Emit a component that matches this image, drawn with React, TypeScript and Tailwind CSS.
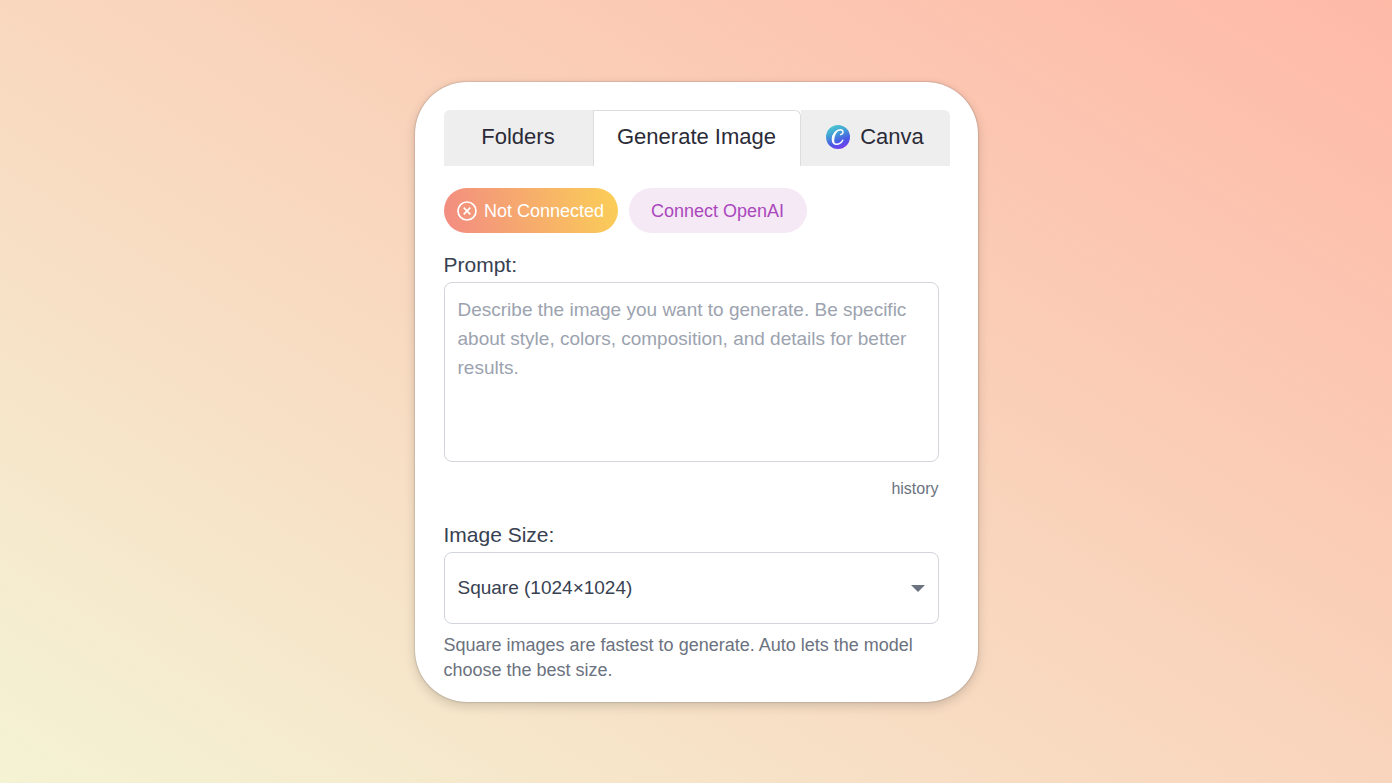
import React, { useState } from 'react';

const tabBase = 'flex h-14 items-center justify-center text-[22px] leading-7 text-[#2b2b38]';

const CanvaLogo: React.FC = () => (
  <svg viewBox="0 0 24 24" className="h-6 w-6 shrink-0" aria-hidden="true">
    <defs>
      <linearGradient id="canva-fill" x1="0.3" y1="0" x2="0.7" y2="1">
        <stop offset="0" stopColor="#4cc8d0" />
        <stop offset="0.3" stopColor="#43a5d3" />
        <stop offset="0.7" stopColor="#4a57e6" />
        <stop offset="1" stopColor="#7b3bee" />
      </linearGradient>
    </defs>
    <circle cx="12" cy="12" r="12" fill="url(#canva-fill)" />
    <path
      d="M14.6 9.6c1.5-.2 2.4-1.3 2.400-2.500 0-1.500-1.100-2.300-2.600-2.300-4.200 0-8 4.800-8 9.400 0 3.200 1.600 5.100 4.300 5.100 2.500 0 4.700-1.500 6.100-4.100"
      fill="none"
      stroke="#fff"
      strokeWidth="1.4"
      strokeLinecap="round"
    />
    <path d="M13 5C9.200 6.400 6.200 10.800 6.400 14.600c.1 2.400 1.300 4.100 3.100 4.600-1.200-1.200-1.500-2.900-1.200-5.100.4-3.400 2-7 4.700-9.100z" fill="#fff" />
  </svg>
);

const ErrorIcon: React.FC = () => (
  <svg viewBox="0 0 20 20" className="h-5 w-5 shrink-0" fill="none" stroke="currentColor" aria-hidden="true">
    <circle cx="10" cy="10" r="9" strokeWidth="1.7" />
    <path d="M6.700 6.700l6.600 6.600M13.300 6.700l-6.600 6.600" strokeWidth="1.700" />
  </svg>
);

export default function App() {
  const [prompt, setPrompt] = useState('');
  const [size, setSize] = useState('square');

  return (
    <div className="flex min-h-screen items-center justify-center bg-[linear-gradient(32deg,#f4f3d4,#feb9a7)] font-['Liberation_Sans',Arial,sans-serif]">
      <main className="w-full max-w-[563px] rounded-[52px] bg-white pt-7 pr-7 pb-[19px] pl-[29px] shadow-[0_0_2px_rgba(0,0,0,0.35),0_4px_12px_rgba(0,0,0,0.16)]">
        {/* Tabs */}
        <div role="tablist" className="flex">
          <button role="tab" aria-selected="false" className={`${tabBase} w-[149px] rounded-tl-md bg-[#eeeeee] pb-0.5`}>
            Folders
          </button>
          <button role="tab" aria-selected="true" className={`${tabBase} flex-1 rounded-tr-md border-x border-t border-[#dddddd] bg-white pb-0.5`}>
            Generate Image
          </button>
          <button role="tab" aria-selected="false" className={`${tabBase} w-[149px] gap-2.5 rounded-tr-md bg-[#eeeeee] pb-0.5`}>
            <CanvaLogo />
            Canva
          </button>
        </div>

        <div className="pr-[11px]">
          {/* Connection status */}
          <div className="mt-[22px] flex gap-[11px] text-lg leading-6">
            <span className="flex h-[45px] w-[174px] items-center justify-center gap-[7px] rounded-full bg-[linear-gradient(75deg,#f28b82,#fbcf56)] pt-px font-medium text-white">
              <ErrorIcon />
              Not Connected
            </span>
            <button className="h-[45px] w-[178px] rounded-full bg-[#f5e9f6] pt-px font-medium text-[#ab47bc]">
              Connect OpenAI
            </button>
          </div>

          {/* Prompt */}
          <div className="mt-[18px]">
            <label htmlFor="prompt" className="block text-[21px] leading-7 font-medium text-[#374151]">Prompt:</label>
            <textarea
              id="prompt"
              value={prompt}
              onChange={e => setPrompt(e.target.value)}
              placeholder="Describe the image you want to generate. Be specific about style, colors, composition, and details for better results."
              className="mt-[3px] block h-[180px] w-full resize-none rounded-lg border border-[#d1d5db] px-[13px] py-3 text-[19px] leading-[29px] text-[#374151] outline-none placeholder:text-[#9ca3af]"
            />
            <div className="mt-[15px] flex justify-end">
              <button className="text-base leading-6 text-[#6b7280]">history</button>
            </div>
          </div>

          {/* Image size */}
          <div className="mt-5">
            <label htmlFor="size" className="block text-[21px] leading-7 font-medium text-[#374151]">Image Size:</label>
            <div className="relative mt-[3px]">
              <select
                id="size"
                value={size}
                onChange={e => setSize(e.target.value)}
                className="block h-[72px] w-full appearance-none rounded-lg border border-[#d1d5db] bg-white px-[13px] text-[19px] leading-7 text-[#374151] outline-none"
              >
                <option value="square">Square (1024×1024)</option>
                <option value="auto">Auto</option>
              </select>
              <svg viewBox="0 0 14 7" className="pointer-events-none absolute top-[33px] right-3.5 h-[7px] w-3.5 fill-[#6b7280]" aria-hidden="true">
                <path d="M0 0h14L7 7z" />
              </svg>
            </div>
            <p className="mt-[9px] text-lg leading-[25px] text-[#6b7280]">
              Square images are fastest to generate. Auto lets the model choose the best size.
            </p>
          </div>
        </div>
      </main>
    </div>
  );
}
